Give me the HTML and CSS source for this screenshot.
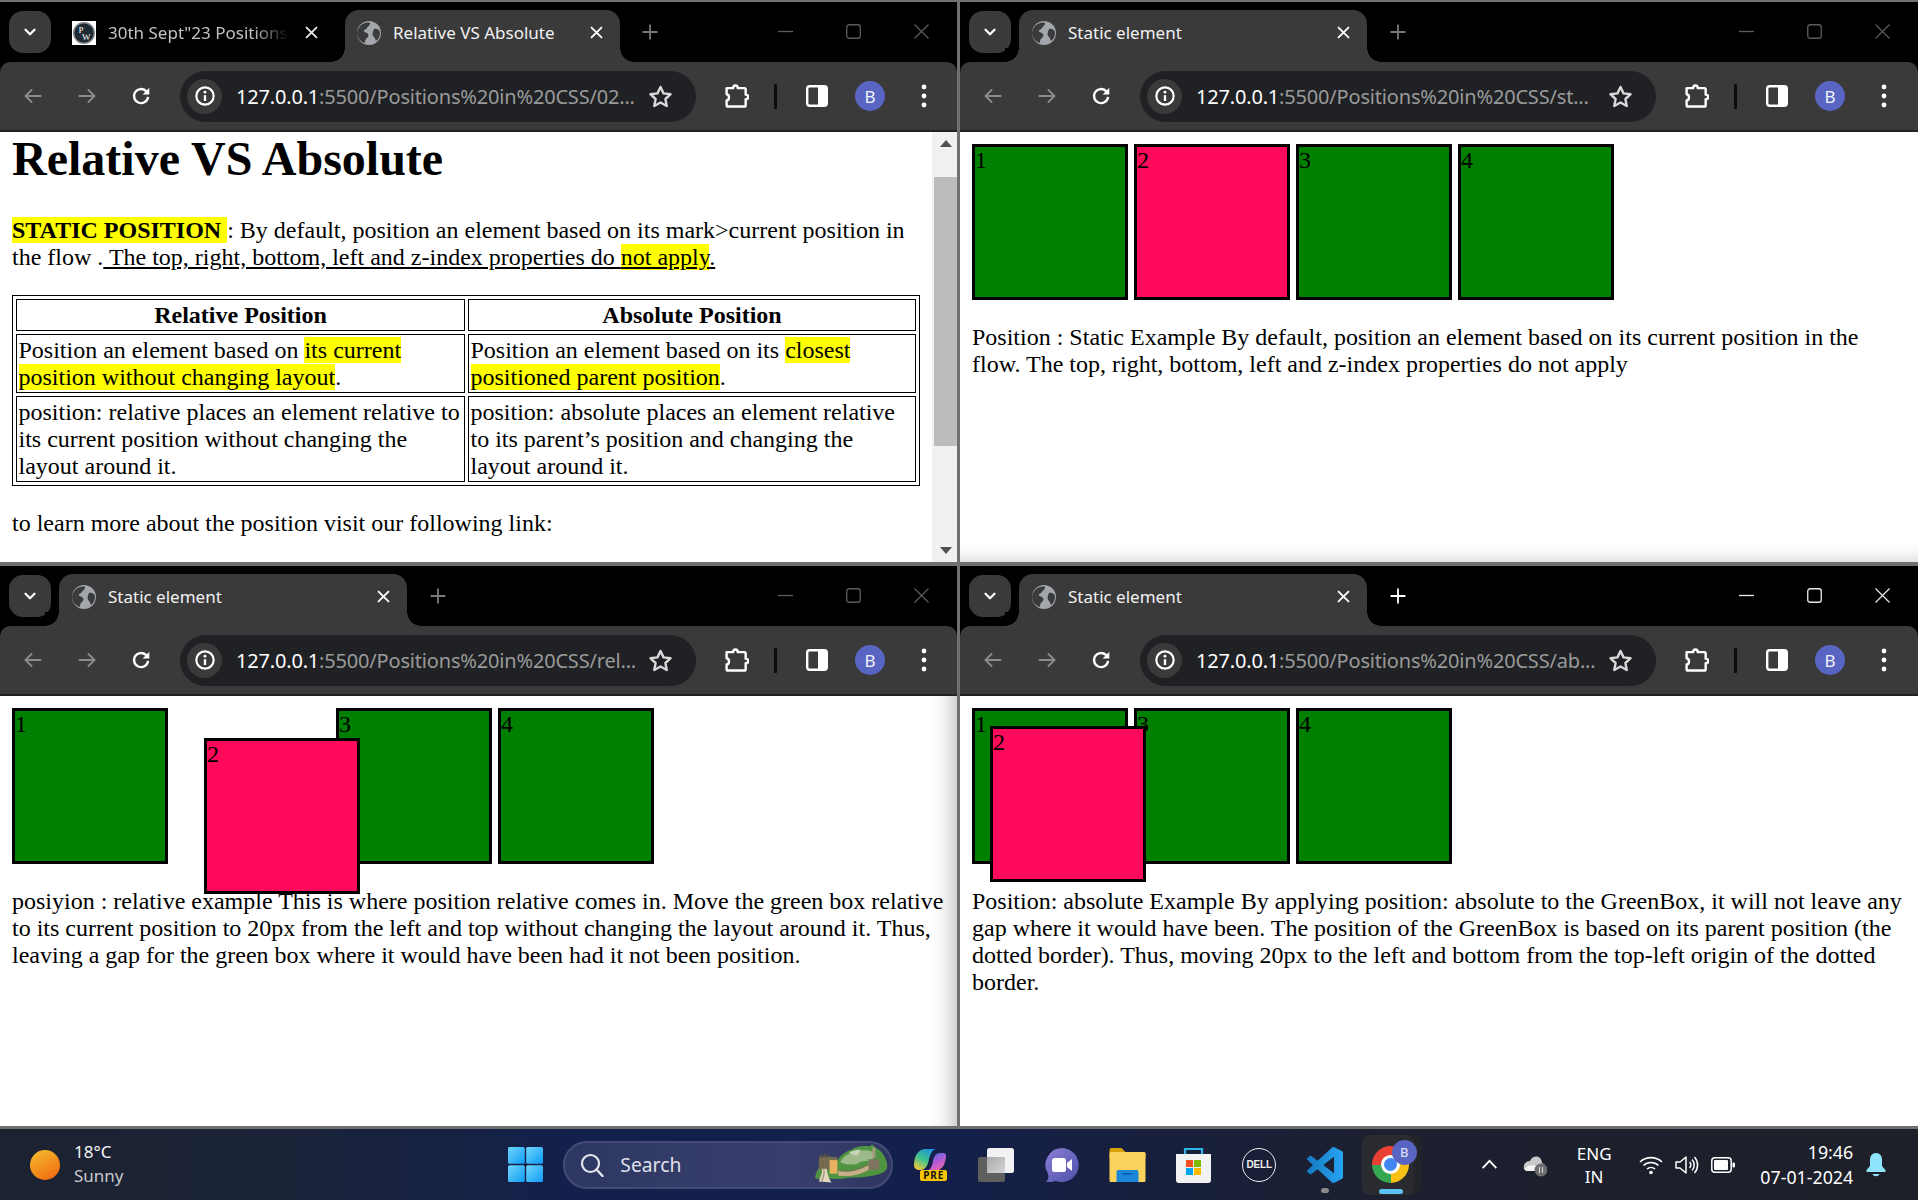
FILE: index.html
```html
<!DOCTYPE html>
<html lang="en">
<head>
<meta charset="utf-8">
<title>Positions in CSS</title>
<link rel="stylesheet" href="styles.css">
</head>
<body>
<svg class="defs" aria-hidden="true">
  <defs>
    <linearGradient id="sun" x1="0.2" y1="0" x2="0.8" y2="1"><stop offset="0" stop-color="#f5b92e"/><stop offset="1" stop-color="#f0690f"/></linearGradient>
    <linearGradient id="winblue" x1="0" y1="0" x2="1" y2="1"><stop offset="0" stop-color="#6fd6fb"/><stop offset="1" stop-color="#0f9bf5"/></linearGradient>
    <linearGradient id="cop1" x1="0.2" y1="1" x2="0.8" y2="0"><stop offset="0" stop-color="#f2c83c"/><stop offset=".45" stop-color="#3fc48a"/><stop offset="1" stop-color="#1a8fe0"/></linearGradient>
    <linearGradient id="cop2" x1="0.2" y1="0" x2="0.8" y2="1"><stop offset="0" stop-color="#3a6fe0"/><stop offset=".5" stop-color="#b25ad8"/><stop offset="1" stop-color="#f06aa0"/></linearGradient>
    <linearGradient id="chat" x1="0" y1="0" x2="1" y2="1"><stop offset="0" stop-color="#8a7fd8"/><stop offset="1" stop-color="#4f4fa8"/></linearGradient>
    <linearGradient id="code" x1="0" y1="0" x2="1" y2="0"><stop offset="0" stop-color="#1578c0"/><stop offset="1" stop-color="#27a4f2"/></linearGradient>
    <linearGradient id="tvmid" x1="0" y1="0" x2="1" y2="1"><stop offset="0" stop-color="#a8a8ab"/><stop offset="1" stop-color="#d6d6d8"/></linearGradient>
    <symbol id="i-chev" viewBox="0 0 24 24"><path d="M6 9l6 6 6-6" fill="none" stroke="currentColor" stroke-width="3" stroke-linecap="round" stroke-linejoin="round"/></symbol>
    <symbol id="i-globe" viewBox="0 0 24 24"><circle cx="12" cy="12" r="12" fill="#a3a6aa"/><path d="M4 4c3-2 7-3 9-2 0 3-2 3-3 5s-3 1-3 3 3 1 4 3c1 1 0 3-1 4-2 1-2 3-2 5-4-1-8-5-8-10 0-3 2-6 4-8zM17 8c2-1 5 0 6 3 0 4-1 7-4 9-1-2-1-4-3-5-1-2 0-5 1-7z" fill="#3a3b3d"/></symbol>
    <symbol id="i-x" viewBox="0 0 24 24"><path d="M5 5l14 14M19 5L5 19" fill="none" stroke="currentColor" stroke-width="2.6" stroke-linecap="round"/></symbol>
    <symbol id="i-plus" viewBox="0 0 24 24"><path d="M12 3v18M3 12h18" fill="none" stroke="currentColor" stroke-width="2.4" stroke-linecap="round"/></symbol>
    <symbol id="i-back" viewBox="0 0 24 24"><path d="M22 12H3M11 4l-8 8 8 8" fill="none" stroke="currentColor" stroke-width="2.4"/></symbol>
    <symbol id="i-fwd" viewBox="0 0 24 24"><path d="M2 12h19M13 4l8 8-8 8" fill="none" stroke="currentColor" stroke-width="2.4"/></symbol>
    <symbol id="i-reload" viewBox="0 0 24 24"><path d="M20.5 13a8.5 8.5 0 1 1-2.6-7.1L21 8.6" fill="none" stroke="currentColor" stroke-width="2.8"/><path d="M22 2.2v8h-8z" fill="currentColor"/></symbol>
    <symbol id="i-info" viewBox="0 0 24 24"><circle cx="12" cy="12" r="10.4" fill="none" stroke="currentColor" stroke-width="2.6"/><path d="M12 11v7" stroke="currentColor" stroke-width="2.8"/><circle cx="12" cy="7.4" r="1.7" fill="currentColor"/></symbol>
    <symbol id="i-star" viewBox="0 0 24 24"><path d="M12 2.8l2.9 6.2 6.8.8-5 4.6 1.3 6.7L12 17.8l-6 3.3 1.3-6.7-5-4.6 6.8-.8z" fill="none" stroke="currentColor" stroke-width="2.3" stroke-linejoin="round"/></symbol>
    <symbol id="i-ext" viewBox="0 0 24 24"><path d="M2.5 4h6.3c0-3.4 4.4-3.4 4.4 0h6.3c.8 0 1.3.5 1.3 1.3v4.9c3.3 0 3.3 4.4 0 4.4v5.7c0 .8-.5 1.3-1.3 1.3H3.8c-.8 0-1.3-.5-1.3-1.3v-4.4c3-.3 3-5.7 0-6z" fill="none" stroke="currentColor" stroke-width="2.3" stroke-linejoin="round"/></symbol>
    <symbol id="i-side" viewBox="0 0 22 22"><rect x="1.2" y="1.2" width="19.6" height="19.6" rx="2.5" fill="none" stroke="currentColor" stroke-width="2.4"/><rect x="12" y="1.2" width="8.8" height="19.6" fill="currentColor"/></symbol>
    <symbol id="i-kebab" viewBox="0 0 6 24"><circle cx="3" cy="3" r="2.4" fill="currentColor"/><circle cx="3" cy="12" r="2.4" fill="currentColor"/><circle cx="3" cy="21" r="2.4" fill="currentColor"/></symbol>
    <symbol id="i-min" viewBox="0 0 16 16"><path d="M0 8h16" stroke="currentColor" stroke-width="1.4"/></symbol>
    <symbol id="i-max" viewBox="0 0 16 16"><rect x=".8" y=".8" width="14.4" height="14.4" rx="2.5" fill="none" stroke="currentColor" stroke-width="1.4"/></symbol>
    <symbol id="i-close" viewBox="0 0 16 16"><path d="M.5.5l15 15M15.500.5l-15 15" fill="none" stroke="currentColor" stroke-width="1.3"/></symbol>
  </defs>
</svg>

<main class="desktop">

  <section class="window">
    <header class="titlebar">
      <button class="tab-menu"><svg class="ic-chev"><use href="#i-chev"/></svg></button>
      <div class="tab tab-first">
        <svg class="favicon" viewBox="0 0 24 24"><rect width="24" height="24" fill="#fff"/><circle cx="12" cy="12" r="11" fill="#7d8489"/><circle cx="12" cy="12" r="9.6" fill="#1d2a33"/><text x="6.500" y="11.500" class="pw">P</text><text x="10" y="19" class="pw">W</text></svg>
        <span class="tab-title tab-fade">30th Sept"23 Positions</span>
        <svg class="tab-x"><use href="#i-x"/></svg>
      </div>
      <div class="tab tab-active tab-second">
        <svg class="favicon"><use href="#i-globe"/></svg>
        <span class="tab-title">Relative VS Absolute</span>
        <svg class="tab-x"><use href="#i-x"/></svg>
      </div>
      <svg class="new-tab"><use href="#i-plus"/></svg>
      <div class="win-controls">
        <svg><use href="#i-min"/></svg><svg><use href="#i-max"/></svg><svg><use href="#i-close"/></svg>
      </div>
    </header>
    <nav class="toolbar">
      <svg class="nav-ic dim"><use href="#i-back"/></svg>
      <svg class="nav-ic dim"><use href="#i-fwd"/></svg>
      <svg class="nav-ic"><use href="#i-reload"/></svg>
      <div class="omnibox">
        <span class="site-info"><svg><use href="#i-info"/></svg></span>
        <span class="url"><b>127.0.0.1</b>:5500/Positions%20in%20CSS/02...</span>
        <svg class="star"><use href="#i-star"/></svg>
      </div>
      <svg class="ext"><use href="#i-ext"/></svg>
      <span class="divider"></span>
      <svg class="side"><use href="#i-side"/></svg>
      <span class="avatar">B</span>
      <svg class="kebab"><use href="#i-kebab"/></svg>
    </nav>
    <div class="viewport">
      <article class="page page-doc">
        <h1>Relative VS Absolute</h1>
        <p><mark><strong>STATIC POSITION </strong></mark> : By default, position an element based on its mark&gt;current position in the flow .<u> The top, right, bottom, left and z-index properties do <mark>not apply</mark>.</u></p>
        <table>
          <colgroup><col class="col-a"><col class="col-b"></colgroup>
          <tr><th>Relative Position</th><th>Absolute Position</th></tr>
          <tr><td>Position an element based on <mark>its current position without changing layout</mark>.</td><td>Position an element based on its <mark>closest positioned parent position</mark>.</td></tr>
          <tr><td>position: relative places an element relative to its current position without changing the layout around it.</td><td>position: absolute places an element relative to its parent’s position and changing the layout around it.</td></tr>
        </table>
        <p>to learn more about the position visit our following link:</p>
      </article>
      <div class="scrollbar">
        <span class="arrow arrow-up"></span>
        <div class="track"><div class="thumb"></div></div>
        <span class="arrow arrow-down"></span>
      </div>
    </div>
  </section>

  <section class="window">
    <header class="titlebar">
      <button class="tab-menu"><svg class="ic-chev"><use href="#i-chev"/></svg></button>
      <div class="tab tab-active tab-solo">
        <svg class="favicon"><use href="#i-globe"/></svg>
        <span class="tab-title">Static element</span>
        <svg class="tab-x"><use href="#i-x"/></svg>
      </div>
      <svg class="new-tab"><use href="#i-plus"/></svg>
      <div class="win-controls">
        <svg><use href="#i-min"/></svg><svg><use href="#i-max"/></svg><svg><use href="#i-close"/></svg>
      </div>
    </header>
    <nav class="toolbar">
      <svg class="nav-ic dim"><use href="#i-back"/></svg>
      <svg class="nav-ic dim"><use href="#i-fwd"/></svg>
      <svg class="nav-ic"><use href="#i-reload"/></svg>
      <div class="omnibox">
        <span class="site-info"><svg><use href="#i-info"/></svg></span>
        <span class="url"><b>127.0.0.1</b>:5500/Positions%20in%20CSS/st...</span>
        <svg class="star"><use href="#i-star"/></svg>
      </div>
      <svg class="ext"><use href="#i-ext"/></svg>
      <span class="divider"></span>
      <svg class="side"><use href="#i-side"/></svg>
      <span class="avatar">B</span>
      <svg class="kebab"><use href="#i-kebab"/></svg>
    </nav>
    <div class="viewport shade-bottom">
      <article class="page">
        <div class="stage">
          <div class="box">1</div><div class="box pink">2</div><div class="box">3</div><div class="box">4</div>
        </div>
        <p class="demo-text">Position : Static Example By default, position an element based on its current position in the flow. The top, right, bottom, left and z-index properties do not apply</p>
      </article>
    </div>
  </section>

  <section class="window window-low">
    <header class="titlebar">
      <button class="tab-menu"><svg class="ic-chev"><use href="#i-chev"/></svg></button>
      <div class="tab tab-active tab-solo">
        <svg class="favicon"><use href="#i-globe"/></svg>
        <span class="tab-title">Static element</span>
        <svg class="tab-x"><use href="#i-x"/></svg>
      </div>
      <svg class="new-tab"><use href="#i-plus"/></svg>
      <div class="win-controls">
        <svg><use href="#i-min"/></svg><svg><use href="#i-max"/></svg><svg><use href="#i-close"/></svg>
      </div>
    </header>
    <nav class="toolbar">
      <svg class="nav-ic dim"><use href="#i-back"/></svg>
      <svg class="nav-ic dim"><use href="#i-fwd"/></svg>
      <svg class="nav-ic"><use href="#i-reload"/></svg>
      <div class="omnibox">
        <span class="site-info"><svg><use href="#i-info"/></svg></span>
        <span class="url"><b>127.0.0.1</b>:5500/Positions%20in%20CSS/rel...</span>
        <svg class="star"><use href="#i-star"/></svg>
      </div>
      <svg class="ext"><use href="#i-ext"/></svg>
      <span class="divider"></span>
      <svg class="side"><use href="#i-side"/></svg>
      <span class="avatar">B</span>
      <svg class="kebab"><use href="#i-kebab"/></svg>
    </nav>
    <div class="viewport shade-right">
      <article class="page">
        <div class="stage">
          <div class="box">1</div><div class="box pink shifted">2</div><div class="box">3</div><div class="box">4</div>
        </div>
        <p class="demo-text">posiyion : relative example This is where position relative comes in. Move the green box relative to its current position to 20px from the left and top without changing the layout around it. Thus, leaving a gap for the green box where it would have been had it not been position.</p>
      </article>
    </div>
  </section>

  <section class="window window-low window-focus">
    <header class="titlebar">
      <button class="tab-menu"><svg class="ic-chev"><use href="#i-chev"/></svg></button>
      <div class="tab tab-active tab-solo">
        <svg class="favicon"><use href="#i-globe"/></svg>
        <span class="tab-title">Static element</span>
        <svg class="tab-x"><use href="#i-x"/></svg>
      </div>
      <svg class="new-tab"><use href="#i-plus"/></svg>
      <div class="win-controls">
        <svg><use href="#i-min"/></svg><svg><use href="#i-max"/></svg><svg><use href="#i-close"/></svg>
      </div>
    </header>
    <nav class="toolbar">
      <svg class="nav-ic dim"><use href="#i-back"/></svg>
      <svg class="nav-ic dim"><use href="#i-fwd"/></svg>
      <svg class="nav-ic"><use href="#i-reload"/></svg>
      <div class="omnibox">
        <span class="site-info"><svg><use href="#i-info"/></svg></span>
        <span class="url"><b>127.0.0.1</b>:5500/Positions%20in%20CSS/ab...</span>
        <svg class="star"><use href="#i-star"/></svg>
      </div>
      <svg class="ext"><use href="#i-ext"/></svg>
      <span class="divider"></span>
      <svg class="side"><use href="#i-side"/></svg>
      <span class="avatar">B</span>
      <svg class="kebab"><use href="#i-kebab"/></svg>
    </nav>
    <div class="viewport">
      <article class="page">
        <div class="stage">
          <div class="box">1</div><div class="box pink lifted">2</div><div class="box">3</div><div class="box">4</div>
        </div>
        <p class="demo-text">Position: absolute Example By applying position: absolute to the GreenBox, it will not leave any gap where it would have been. The position of the GreenBox is based on its parent position (the dotted border). Thus, moving 20px to the left and bottom from the top-left origin of the dotted border.</p>
      </article>
    </div>
  </section>

</main>

<footer class="taskbar">
  <div class="weather">
    <svg class="sun" viewBox="0 0 30 30"><circle cx="15" cy="15" r="15" fill="url(#sun)"/></svg>
    <div class="weather-text"><span class="temp">18°C</span><span class="cond">Sunny</span></div>
  </div>

  <div class="task-cell">
    <svg class="win-logo" viewBox="0 0 35 35"><rect width="16.800" height="16.800" rx="1.500" fill="url(#winblue)"/><rect x="18.200" width="16.800" height="16.800" rx="1.500" fill="url(#winblue)"/><rect y="18.200" width="16.800" height="16.800" rx="1.500" fill="url(#winblue)"/><rect x="18.200" y="18.200" width="16.800" height="16.800" rx="1.500" fill="url(#winblue)"/></svg>
  </div>

  <div class="search">
    <svg class="search-ic" viewBox="0 0 24 24"><circle cx="10.500" cy="10.500" r="8.500" fill="none" stroke="#e6e8ee" stroke-width="2.200"/><path d="M16.500 16.500l6 6.500" stroke="#e6e8ee" stroke-width="2.400" stroke-linecap="round"/></svg>
    <span class="search-label">Search</span>
    <svg class="wall" viewBox="0 0 76 40">
      <path d="M1 34c1-6 4-10 6-14l5-8 8 1 4 4c2-5 8-10 15-12 5-3 12-4 18-3l3-2 3 3c6 3 10 8 12 16 1 6-1 9-7 11-8 3-20 4-32 4-8 1-14 2-20 1-6 1-12 1-15-1z" fill="#4f9440"/>
      <path d="M27 18c3-6 10-10 18-11 8-2 14-1 17 2l-2 8c-6-1-12 0-16 3-6 1-12 1-17-2z" fill="#9dbb8a"/>
      <path d="M36 8c4-2 8-3 12-3l-3 6c-3 0-6 0-9-3z" fill="#c9d3b8"/>
      <path d="M25 27c10 3 24-1 33-7l3-1 1 3c-8 7-23 12-37 10z" fill="#c8ad88"/>
      <path d="M25 26c10 3 23-1 33-7" fill="none" stroke="#7d6c58" stroke-width="1"/>
      <rect x="5" y="13" width="12" height="13" fill="#75694f"/>
      <path d="M5 13l2-3 2 2 2-3 2 3 2-2 2 3z" fill="#5d5340"/>
      <rect x="16" y="15" width="8" height="15" fill="#e6b25f"/>
      <rect x="16" y="13" width="8" height="3" fill="#7a6c52"/>
      <rect x="56" y="15" width="11" height="11" fill="#7f7560"/>
      <rect x="60" y="3" width="3" height="11" fill="#a79a80"/>
      <path d="M5 38c2-6 4-9 3-13h5c1 4 1 8 5 14z" fill="#e0d5bb"/>
      <path d="M8 38c2-5 3-9 2-13" fill="none" stroke="#8f836b" stroke-width="1"/>
    </svg>
  </div>

  <div class="task-cell">
    <div class="copilot">
      <svg viewBox="0 0 34 24"><path d="M1 17C1 8 5 1 13 1h11c-4 0-6 3-8 10-1 6-3 11-9 11-4 0-6-2-6-5z" fill="url(#cop1)"/><path d="M33 7c0 9-4 16-12 16h-9c4 0 7-3 8-10 1-5 3-8 7-8 3 0 6 0 6 2z" fill="url(#cop2)"/></svg>
      <span class="pre">PRE</span>
    </div>
  </div>

  <div class="task-cell">
    <svg class="taskview" viewBox="0 0 36 34"><rect y="9" width="27" height="25" rx="2.500" fill="#5f5f60"/><rect x="9" width="27" height="25" rx="2.500" fill="#f2f2f4"/><rect x="9" y="9" width="18" height="16" fill="url(#tvmid)"/></svg>
  </div>

  <div class="task-cell">
    <svg class="chat" viewBox="0 0 34 34"><path d="M17 0a17 17 0 1 1-6 33c-3 1-7 1-10 1 2-2 3-4 2-8A17 17 0 0 1 17 0z" fill="url(#chat)"/><rect x="7" y="10" width="14" height="14" rx="2.500" fill="#fff"/><path d="M22 15l5-4v12l-5-4z" fill="#fff"/></svg>
  </div>

  <div class="task-cell">
    <svg class="folder" viewBox="0 0 36 34"><path d="M0 2q0-2 2-2h10l4 4h18q2 0 2 2v4H0z" fill="#d9a20b"/><rect y="4" width="36" height="30" rx="1.500" fill="#fbd25c"/><path d="M7 24q0-2 2-2h18q2 0 2 2v10H7z" fill="#1a86d8"/><rect x="13" y="25" width="10" height="1.600" fill="#0c5da8"/></svg>
  </div>

  <div class="task-cell">
    <svg class="store" viewBox="0 0 35 36"><path d="M9 8V2h17v6" fill="none" stroke="#2fb4ea" stroke-width="2.200"/><path d="M0 7h35v26q0 3-3 3H3q-3 0-3-3z" fill="#f2f2f3"/><rect x="10" y="13" width="7" height="7" fill="#f25022"/><rect x="18" y="13" width="7" height="7" fill="#7fba00"/><rect x="10" y="21" width="7" height="7" fill="#00a4ef"/><rect x="18" y="21" width="7" height="7" fill="#ffb900"/></svg>
  </div>

  <div class="task-cell">
    <div class="dell"><span>DELL</span></div>
  </div>

  <div class="task-cell task-code">
    <svg class="vscode" viewBox="0 0 24 24"><path fill="url(#code)" d="M23.150 2.587L18.210.21a1.494 1.494 0 0 0-1.705.29l-9.460 8.630-4.120-3.128a.999.999 0 0 0-1.276.057L.327 7.261A1 1 0 0 0 .326 8.740L3.899 12 .326 15.260a1 1 0 0 0 .001 1.479L1.650 17.940a.999.999 0 0 0 1.276.057l4.120-3.128 9.460 8.630a1.492 1.492 0 0 0 1.704.29l4.942-2.377A1.500 1.500 0 0 0 24 20.060V3.939a1.500 1.500 0 0 0-.850-1.352zm-5.146 14.861L10.826 12l7.178-5.448v10.896z"/></svg>
    <span class="run-dot"></span>
  </div>

  <div class="task-cell task-chrome">
    <div class="chrome-tile">
      <div class="chrome-logo"><span class="chrome-eye"></span></div>
      <span class="chrome-badge">B</span>
      <span class="run-bar"></span>
    </div>
  </div>

  <div class="tray">
    <svg class="tray-chev" viewBox="0 0 18 12"><path d="M1.500 10L9 2l7.500 8" fill="none" stroke="#fff" stroke-width="2"/></svg>
    <svg class="tray-cloud" viewBox="0 0 24 24"><path d="M1 16c-1-5 2-8 6-8 1-4 7-6 10-3 1 1 2 3 2 5 3 1 4 4 3 7z" fill="#c9c9cb"/><path d="M1 16c3-3 8-5 12-3l-1 5H3z" fill="#f4f4f4"/><circle cx="18" cy="17" r="6.500" fill="#6d6d6f"/><path d="M16.500 14v6M19.500 14v6" stroke="#ddd" stroke-width="1"/></svg>
    <div class="lang"><span>ENG</span><span>IN</span></div>
    <svg class="tray-wifi" viewBox="0 0 24 20"><path d="M1 7a16 16 0 0 1 22 0M4.500 10.500a11 11 0 0 1 15 0M8 14a6 6 0 0 1 8 0" fill="none" stroke="#fff" stroke-width="1.600"/><circle cx="12" cy="17.500" r="1.800" fill="#fff"/></svg>
    <svg class="tray-vol" viewBox="0 0 24 20"><path d="M1 7h4l6-5v16l-6-5H1z" fill="none" stroke="#fff" stroke-width="1.500" stroke-linejoin="round"/><path d="M14.500 7a4 4 0 0 1 0 6M17 4.500a8 8 0 0 1 0 11M19.500 2a12 12 0 0 1 0 16" fill="none" stroke="#fff" stroke-width="1.500"/></svg>
    <svg class="tray-batt" viewBox="0 0 24 16"><rect x=".8" y=".8" width="19.400" height="14.400" rx="3" fill="none" stroke="#fff" stroke-width="1.500"/><rect x="3" y="3" width="14" height="10" rx="1" fill="#fff"/><rect x="21.500" y="5.500" width="2.500" height="5" rx="1" fill="#fff"/></svg>
    <div class="clock"><span>19:46</span><span>07-01-2024</span></div>
    <svg class="tray-bell" viewBox="0 0 20 24"><path d="M10 0c4 0 6 3 6 7v5c0 2 2 3 3.500 5 .5 1 0 2-1 2H1.500c-1 0-1.500-1-1-2C2 15 4 14 4 12V7c0-4 2-7 6-7z" fill="#8fe3fb"/><path d="M6.500 21h7c-1 3-6 3-7 0z" fill="#8fe3fb"/></svg>
  </div>
</footer>
</body>
</html>
```

FILE: styles.css
```css
* { box-sizing: border-box; }
html, body { margin: 0; padding: 0; }
body {
  width: 1918px;
  height: 1200px;
  overflow: hidden;
  background: #6f6f6f;
  font-family: "Noto Sans", "Open Sans", sans-serif;
}
.defs { position: absolute; width: 0; height: 0; overflow: hidden; }

/* desktop grid */
.desktop {
  display: grid;
  grid-template-columns: 957px 958px;
  grid-template-rows: 560px 560px;
  column-gap: 3px;
  row-gap: 4px;
  padding-top: 2px;
  height: 1129px;
  background: #707070;
}
.window { display: flex; flex-direction: column; min-width: 0; min-height: 0; background: #000; overflow: hidden; }

/* title bar */
.titlebar { display: flex; height: 60px; flex: none; padding-left: 9px; background: #000; color: #d0d0d0; }
.tab-menu {
  width: 42px; height: 42px; margin: 9px 8px 0 0; padding: 0; border: 0;
  border-radius: 14px; background: #3a3a3a; color: #fff;
  display: flex; align-items: center; justify-content: center;
}
.ic-chev { width: 18px; height: 18px; }
.tab {
  position: relative; display: flex; align-items: center; height: 52px; margin-top: 8px;
  padding: 0 0 7px 13px; font-size: 17px; color: #c2c2c2;
}
.tab-first { width: 286px; }
.tab-second { width: 275px; padding-left: 12px; }
.tab-solo { width: 348px; }
.tab-active { background: #3a3a3a; border-radius: 14px 14px 0 0; color: #f1f1f1; }
.tab-active::before, .tab-active::after {
  content: ""; position: absolute; bottom: 0; width: 14px; height: 14px;
}
.tab-active::before { left: -14px; background: radial-gradient(circle at 0 0, #000 13.500px, #3a3a3a 14px); }
.tab-active::after { right: -14px; background: radial-gradient(circle at 100% 0, #000 13.500px, #3a3a3a 14px); }
.favicon { width: 24px; height: 24px; flex: none; margin-right: 12px; }
.tab-title { flex: 1; min-width: 0; white-space: nowrap; overflow: hidden; letter-spacing: 0; }
.tab-fade { -webkit-mask-image: linear-gradient(90deg, #000 80%, transparent 100%); mask-image: linear-gradient(90deg, #000 80%, transparent 100%); }
.tab-x { width: 17px; height: 17px; flex: none; margin: 0 15px 0 14px; color: #e8e8e8; }
.tab-first .tab-x { margin-right: 25px; }
.tab-active .tab-x { color: #fff; }
.pw { font: 9px "Liberation Serif", serif; fill: #fff; }
.new-tab { width: 18px; height: 18px; flex: none; margin: 21px 0 0 21px; color: #7a7a7a; }
.tab-solo + .new-tab { margin-left: 22px; }
.win-controls { margin-left: auto; display: flex; gap: 53px; padding: 22px 28px 0 0; color: #5c5c5c; }
.win-controls svg { width: 15px; height: 15px; }

/* toolbar */
.toolbar {
  display: flex; align-items: center; height: 70px; flex: none;
  background: #3a3a3a; border-radius: 10px 10px 0 0; border-bottom: 2px solid #202020;
  padding: 0 0 0 23px; color: #fff;
}
.nav-ic { width: 20px; height: 20px; flex: none; margin-right: 34px; }
.nav-ic.dim { color: #8b8b8b; }
.omnibox {
  display: flex; align-items: center; width: 516px; height: 51px; margin-left: -5px;
  border-radius: 26px; background: #202124; padding: 0 25px 0 7px; flex: none; font-size: 20px;
}
.site-info { width: 35px; height: 35px; border-radius: 50%; background: #3a3a3a; display: flex; align-items: center; justify-content: center; flex: none; }
.site-info svg { width: 20px; height: 20px; }
.url { flex: 1; margin-left: 14px; white-space: nowrap; color: #9a9a9a; letter-spacing: -.18px; }
.url b { font-weight: 400; color: #fff; }
.star { width: 25px; height: 25px; color: #d8d8d8; flex: none; margin-right: -2px; }
.ext { width: 25px; height: 25px; margin-left: 28px; flex: none; }
.divider { width: 3px; height: 25px; background: #0c0c0c; margin-left: 25px; border-radius: 1px; flex: none; }
.side { width: 22px; height: 22px; margin-left: 29px; flex: none; }
.avatar {
  width: 30px; height: 30px; border-radius: 50%; background: #5865c3; color: #f2f2f2;
  display: flex; align-items: center; justify-content: center; font-size: 17px; margin-left: 27px; flex: none;
}
.kebab { width: 6px; height: 24px; margin-left: 36px; flex: none; }

/* focused window */
.window-focus .new-tab { color: #fff; }
.window-focus .win-controls { color: #e8e8e8; }

/* page area */
.viewport { display: flex; flex: 1; min-height: 0; background: #fff; }
.shade-right { box-shadow: inset -26px 0 22px -22px rgba(0,0,0,.28); }
.shade-bottom { box-shadow: inset 0 -20px 18px -18px rgba(0,0,0,.18); }
.page {
  flex: 1; min-width: 0; position: relative; padding: 0 12px; overflow: hidden;
  font: 24px/27px "Liberation Serif", "Times New Roman", serif; color: #000;
}
h1 { font-size: 48px; line-height: 55px; font-weight: 700; margin: -1px 0 31px; }
.page p { margin: 24px 0; }
.page-doc h1 + p { margin-top: 0; }
mark { background: #ff0; color: #000; }

table { width: 908px; table-layout: fixed; border: 1px solid #000; border-spacing: 3px; }
.col-a { width: 449px; }
.col-b { width: 448px; }
th, td { border: 1px solid #000; padding: 1.500px; text-align: left; }
th { text-align: center; font-weight: 700; }

/* scrollbar */
.scrollbar { width: 25px; flex: none; background: #f1f1f1; display: flex; flex-direction: column; align-items: flex-end; }
.arrow { width: 23px; height: 23px; flex: none; display: flex; align-items: center; justify-content: center; }
.arrow::before { content: ""; border-left: 6px solid transparent; border-right: 6px solid transparent; }
.arrow-up::before { border-bottom: 7px solid #505050; }
.arrow-down::before { border-top: 7px solid #505050; }
.track { flex: 1; width: 23px; }
.thumb { width: 23px; height: 269px; margin-top: 22px; background: #bcbcbc; }

/* demo boxes */
.stage { display: flex; gap: 6px; padding-top: 12px; }
.box { width: 156px; height: 156px; border: 3px solid #000; background: #008000; flex: none; }
.pink { background: #ff0a5a; }
.shifted { position: relative; top: 30px; left: 30px; }
.lifted { position: absolute; top: 30px; left: 30px; }
.page .demo-text { margin: 24px 0 0; }

/* taskbar */
.taskbar {
  display: flex; align-items: center; height: 71px;
  background: linear-gradient(90deg, #1c2230 0%, #1a2338 15%, #14204c 30%, #14204c 48%, #181f3a 62%, #1c2030 72%, #1d2028 100%);
  color: #fff;
}
.weather { display: flex; align-items: center; width: 493px; padding-left: 30px; flex: none; }
.sun { width: 30px; height: 30px; }
.weather-text { display: flex; flex-direction: column; margin: 0 0 2px 14px; font-size: 17px; line-height: 24px; }
.temp { color: #f4f4f4; }
.cond { color: #c8c8cc; }
.task-cell { width: 65.800px; height: 71px; flex: none; display: flex; align-items: center; justify-content: center; position: relative; }
.win-logo { width: 35px; height: 35px; }
.search {
  width: 330px; height: 48px; flex: none; margin: 0 4px 0 4.500px; display: flex; align-items: center;
  border-radius: 24px; padding-left: 15px; position: relative;
  background: linear-gradient(90deg, #2e3762, #383f6d 70%, #2f3661); border: 2px solid #454b76;
  color: #dfe1e8; font-size: 19.300px;
}
.search-ic { width: 24px; height: 24px; }
.search-label { margin-left: 16px; }
.wall { position: absolute; right: 3px; top: 1px; width: 74px; height: 40px; }
.copilot { position: relative; width: 34px; height: 33px; }
.copilot svg { display: block; width: 34px; height: 24px; }
.pre {
  position: absolute; left: 7px; bottom: 0; width: 27px; height: 11px; border-radius: 2px;
  background: #f7c400; color: #111; font: 700 10px/11px "Noto Sans", sans-serif; text-align: center; letter-spacing: .8px;
}
.taskview { width: 36px; height: 34px; }
.chat { width: 34px; height: 34px; }
.folder { width: 37px; height: 34px; }
.store { width: 35px; height: 36px; }
.dell { width: 34px; height: 34px; border: 1.500px solid #eee; border-radius: 50%; display: flex; align-items: center; justify-content: center; }
.dell span { font: 700 10px/1 "Liberation Sans", sans-serif; color: #eee; letter-spacing: -.2px; }
.vscode { width: 36px; height: 36px; }
.run-dot { position: absolute; left: 50%; bottom: 7px; width: 8px; height: 5px; margin-left: -4px; border-radius: 3px; background: #8a8a8a; }
.chrome-tile { position: relative; width: 52px; height: 60px; margin-right: 6px; border-radius: 7px; background: #2a2b30; box-shadow: 7px 0 0 #24252a; display: flex; align-items: center; padding-left: 10px; }
.chrome-logo { width: 37px; height: 37px; border-radius: 50%; background: conic-gradient(from 270deg, #e94235 0 150deg, #f9c116 150deg 270deg, #35a651 270deg 360deg); display: flex; align-items: center; justify-content: center; }
.chrome-eye { width: 19px; height: 19px; border-radius: 50%; background: #4286f4; border: 3px solid #fff; }
.chrome-badge {
  position: absolute; top: 5px; right: -3px; width: 25px; height: 25px; border-radius: 50%;
  background: #5865c3; color: #d8dcf5; font-size: 13px; font-weight: 500;
  display: flex; align-items: center; justify-content: center;
}
.run-bar { position: absolute; left: 17px; bottom: 1px; width: 24px; height: 5px; border-radius: 3px; background: #5cc2f5; }

.tray { display: flex; align-items: center; margin-left: 57px; flex: none; }
.tray-chev { width: 17px; height: 11px; }
.tray-cloud { width: 24px; height: 24px; margin-left: 25.500px; }
.lang { display: flex; flex-direction: column; align-items: center; width: 36px; margin-left: 29px; font-size: 17px; line-height: 23px; }
.tray-wifi { width: 24px; height: 20px; margin-left: 27px; }
.tray-vol { width: 24px; height: 20px; margin-left: 12px; }
.tray-batt { width: 24px; height: 16px; margin-left: 12px; }
.clock { display: flex; flex-direction: column; align-items: flex-end; width: 118px; font-size: 17.800px; line-height: 25px; }
.tray-bell { width: 20px; height: 24px; margin-left: 13px; }
```
